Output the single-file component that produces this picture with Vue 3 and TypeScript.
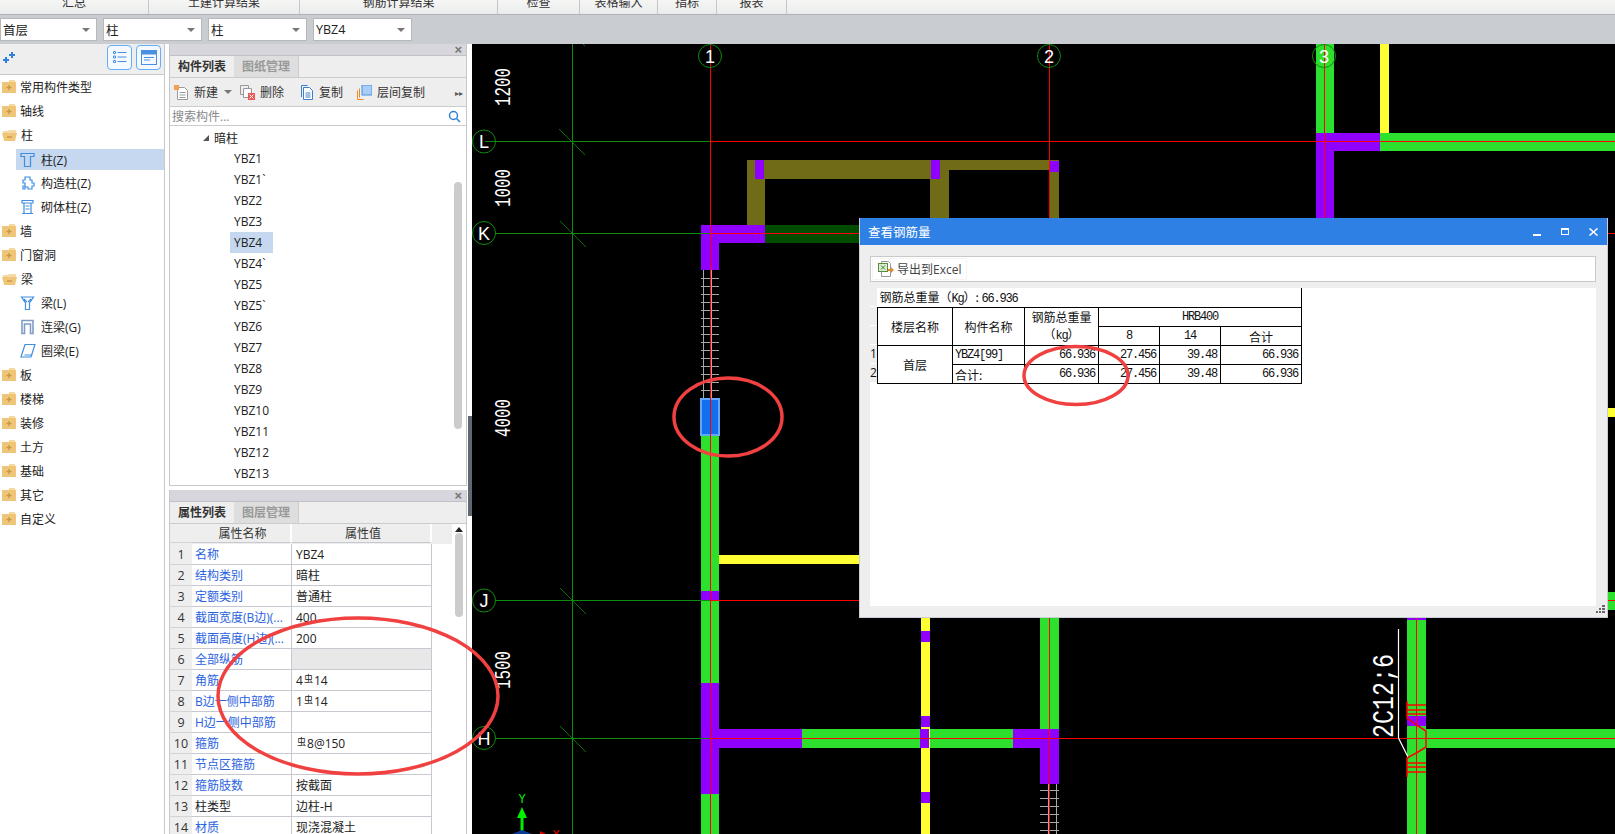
<template>
  <div class="app">
    <div class="menu">
      <div v-for="m in menus" :key="m.label" class="menu-item" :style="{ width: m.w + 'px' }">{{ m.label }}</div>
    </div>

    <div class="filters">
      <div v-for="(f, i) in filters" :key="i" class="select">
        <span>{{ f }}</span><i class="caret"></i>
      </div>
    </div>

    <div class="main">
      <aside class="tree">
        <div class="tree-head">
          <svg class="sparkle" width="14" height="12" viewBox="0 0 14 12">
            <path d="M3 6h2v2h2v2H5v2H3v-2H1V8h2zM9 1h2v2h2v2h-2v2H9V5H7V3h2z" fill="#2f80d8" />
          </svg>
          <button class="view-btn">
            <svg width="14" height="14" viewBox="0 0 14 14" fill="none" stroke="#4a90e0">
              <path d="M.5 1.5h2v2h-2zM.5 6h2v2h-2zM.5 10.5h2v2h-2zM4.5 2.5h9M4.5 7h9M4.5 11.5h9" />
            </svg>
          </button>
          <button class="view-btn">
            <svg width="16" height="15" viewBox="0 0 16 15" fill="none" stroke="#4a90e0">
              <rect x=".5" y=".5" width="15" height="14" />
              <path d="M1 1h14v3H1z" fill="#4a90e0" />
              <path d="M3 7.5h10M3 10h6" />
            </svg>
          </button>
        </div>
        <div v-for="n in tree" :key="n.label" class="tree-row" :class="{ child: n.kind !== 'folder' && n.kind !== 'open', active: n.active }">
          <svg v-if="n.kind === 'folder'" class="ico" width="15" height="14" viewBox="0 0 15 14">
            <path d="M8 0h6v2H8z" fill="#f4d9a4" />
            <rect x="1" y="2" width="14" height="11" fill="#efc677" />
            <path d="M5.500 7.500h5M8 5v5" stroke="#c9974a" stroke-width="1.400" />
          </svg>
          <svg v-else-if="n.kind === 'open'" class="ico" width="16" height="14" viewBox="0 0 16 14">
            <path d="M2 3h5l1-1h7v3H2z" fill="#f4d9a4" />
            <path d="M1 5h15l-2 8H3z" fill="#efc677" />
            <path d="M6 9h5" stroke="#c9974a" stroke-width="1.400" />
          </svg>
          <svg v-else class="ico" width="16" height="16" viewBox="0 0 16 16" fill="none" stroke="#3f8ee0" stroke-width="1.200">
            <path v-if="n.kind === 'col'" d="M1 1.500h13v3h-3.500v10h-6v-10H1z" />
            <path v-else-if="n.kind === 'gz'" d="M5 2h5v3h2v3h2v3h-2v3H8v-2H5v2H3v-3h2V8H3V5h2z" />
            <path v-else-if="n.kind === 'qt'" d="M2 1.500h11v2.500H2zM4 4v10.500h7V4M2 14.500h11M5.500 7h4M5.500 10h4" />
            <path v-else-if="n.kind === 'beam'" d="M1.500 2h12l-4 6v6.500h-4V8zM4 4l3 3M11 4L8 7" />
            <path v-else-if="n.kind === 'lian'" d="M2 1.500h11v13h-2.500V5h-6v9.500H2z" stroke="#7f9cc4" stroke-width="1.600" />
            <path v-else d="M5 1.500h10L11 14H1zM4.500 12h8" />
          </svg>
          <span>{{ n.label }}</span>
        </div>
      </aside>

      <div class="middle">
        <section class="panel list-panel">
          <div class="panel-top"><span>×</span></div>
          <div class="tabs">
            <div class="tab on">构件列表</div>
            <div class="tab">图纸管理</div>
          </div>
          <div class="toolbar">
            <span class="tool new">
              <svg width="15" height="15" viewBox="0 0 15 15" fill="none" stroke="#999">
                <path d="M3.500 2.500h7l3 3v9h-10z" fill="#fff" />
                <path d="M5.500 7.500h6M5.500 10h6M5.500 12.500h6" />
                <rect x="0" y="0" width="5" height="5" fill="#f0a050" stroke="none" />
              </svg>
              新建<i class="caret small"></i>
            </span>
            <span class="tool del">
              <svg width="15" height="15" viewBox="0 0 15 15" fill="none" stroke="#999">
                <path d="M.5.5h8v9h-8z" />
                <path d="M3.500 3.500h8v9h-8z" fill="#fff" />
                <rect x="8" y="8" width="7" height="7" fill="#ee5555" stroke="none" />
                <path d="M9.500 9.500l4 4M13.500 9.500l-4 4" stroke="#fff" />
              </svg>
              删除
            </span>
            <span class="tool copy">
              <svg width="14" height="15" viewBox="0 0 14 15" fill="none" stroke="#3f7fc8">
                <path d="M3.500 2.500h6l3 3v9h-9z" fill="#fff" />
                <path d="M1.500 12V.5h6M5.500 8h5M5.500 10h5M5.500 12h5" />
              </svg>
              复制
            </span>
            <span class="tool layer">
              <svg width="15" height="15" viewBox="0 0 15 15" fill="none">
                <path d="M.5 14.500v-9M.5 14.500h6M2.500 12.500v-9" stroke="#ee8a22" />
                <rect x="5" y="0" width="10" height="10" fill="#a9cdf4" stroke="#4a90e0" />
              </svg>
              层间复制
            </span>
            <span class="more">▸▸</span>
          </div>
          <div class="search">
            <span>搜索构件...</span>
            <svg width="13" height="13" viewBox="0 0 13 13" fill="none" stroke="#2f80d8" stroke-width="1.500">
              <circle cx="5.500" cy="5.500" r="4" /><path d="M8.500 8.500L12 12" />
            </svg>
          </div>
          <div class="list">
            <div class="list-group"><i class="tri"></i>暗柱</div>
            <div class="list-items">
              <div v-for="y in members" :key="y" class="list-item"><span :class="{ picked: y === 'YBZ4' }">{{ y }}</span></div>
            </div>
            <div class="thumb list-thumb"></div>
          </div>
        </section>

        <section class="panel prop-panel">
          <div class="panel-top"><span>×</span></div>
          <div class="tabs">
            <div class="tab on">属性列表</div>
            <div class="tab">图层管理</div>
          </div>
          <div class="prop-body">
            <div class="props">
              <div class="prop-head">
                <div class="c-no blank"></div>
                <div class="c-name">属性名称</div>
                <div class="c-val">属性值</div>
              </div>
              <div v-for="(p, i) in props" :key="p.name" class="prop-row">
                <div class="c-no">{{ i + 1 }}</div>
                <div class="c-name" :class="{ plain: p.plain }">{{ p.name }}</div>
                <div class="c-val" :class="{ grey: p.grey }">
                  <span v-if="p.before !== undefined">{{ p.before }}<sup class="rebar">虫</sup>{{ p.value }}</span>
                  <span v-else>{{ p.value }}</span>
                </div>
              </div>
            </div>
            <div class="prop-scroll">
              <i class="up"></i>
              <div class="thumb prop-thumb"></div>
            </div>
          </div>
        </section>
      </div>

      <div class="splitter"><div class="grab"></div></div>

      <div class="canvas">
        <svg class="drawing" width="1144" height="790" viewBox="471 44 1144 790" shape-rendering="crispEdges">
          <rect v-for="(r, i) in blocks" :key="'b' + i" :x="r[0]" :y="r[1]" :width="r[2]" :height="r[3]" :fill="r[4]" />
          <path :d="rebarPath" stroke="#a8a8a8" fill="none" />
          <path d="M484 141.500H709M494 233.500H709M494 600.500H709M494 738.500H709M571.500 44V834" stroke="#0f8a0f" fill="none" />
          <path d="M709.500 44V834M709 141.500H1615M709 233.500H1615M709 600.500H1615M709 738.500H1615M1048.500 44V834M1323.500 44V220M1415.500 618V834" stroke="#ff0000" fill="none" />
          <g shape-rendering="auto">
            <path d="M558 129L584 155M559 221L585 247M559 588L585 614M559 726L585 752M582 44L584 46" stroke="#0f8a0f" stroke-width=".8" fill="none" />
            <g v-for="c in bubbles" :key="c.t">
              <circle :cx="c.x" :cy="c.y" r="11.500" fill="none" stroke="#0f8a0f" />
              <text :x="c.x" :y="c.y + 6.500" class="bubble" text-anchor="middle">{{ c.t }}</text>
            </g>
            <text v-for="d in dims" :key="d.t" class="dim" :transform="`translate(${d.x},${d.y}) rotate(-90)`" textLength="38" lengthAdjust="spacingAndGlyphs">{{ d.t }}</text>
            <text class="note" transform="translate(1392,738) rotate(-90)" textLength="84" lengthAdjust="spacingAndGlyphs">2C12;6</text>
            <path d="M1397.500 629V738L1407 757" stroke="#fff" stroke-width="1.200" fill="none" />
            <path d="M1406 701V718L1417 726L1425 731V747L1417 752L1406 758V777M1406 705H1425M1406 710H1425M1406 714H1425M1406 763H1425M1406 767H1425M1406 772H1425" stroke="#ff0000" stroke-width="1.500" fill="none" />
            <path d="M521 807L516 818H519.500V832H522.500V818H526Z" fill="#00f000" />
            <path d="M511 834L521 830L531 834Z" fill="#0a3c96" />
            <text x="521" y="803" class="axis-y" text-anchor="middle">Y</text>
            <path d="M539 834V831L545 834Z" fill="#e00000" />
            <text x="555" y="839" class="axis-x" text-anchor="middle">X</text>
          </g>
        </svg>

        <div class="dialog">
          <div class="dlg-title">
            <span>查看钢筋量</span>
            <div class="dlg-btns">
              <i class="b-min"></i>
              <i class="b-max"></i>
              <svg width="9" height="8" viewBox="0 0 9 8" stroke="#fff" stroke-width="1.500"><path d="M.5.5l8 7M8.500.5l-8 7" /></svg>
            </div>
          </div>
          <div class="dlg-bar">
            <div class="export">
              <svg width="16" height="18" viewBox="0 0 16 18" fill="none">
                <path d="M3.500 1.500h7l2 2v13h-9z" fill="#fff" stroke="#999" />
                <rect x=".5" y="3.500" width="9" height="8" fill="#dcecd4" stroke="#5c8a3c" />
                <path d="M3 5.500l4 4M7 5.500l-4 4" stroke="#3f8a2c" />
                <path d="M10 9h3V7l3 3-3 3v-2h-3z" fill="#e58a2c" />
              </svg>
              导出到Excel
            </div>
          </div>
          <div class="dlg-content">
            <div class="row-strip">
              <div style="height: 19px"></div>
              <div style="height: 19px"></div>
              <div style="height: 19px"></div>
              <div style="height: 19px">1</div>
              <div style="height: 19px">2</div>
            </div>
            <table class="sheet">
              <colgroup>
                <col style="width: 75px" /><col style="width: 72px" /><col style="width: 74px" />
                <col style="width: 61px" /><col style="width: 61px" /><col style="width: 81px" />
              </colgroup>
              <tbody>
                <tr>
                  <td colspan="6" class="sheet-title">钢筋总重量（<span class="mono">Kg</span>）: <span class="mono">66.936</span></td>
                </tr>
                <tr>
                  <td rowspan="2">楼层名称</td>
                  <td rowspan="2">构件名称</td>
                  <td rowspan="2" class="two">钢筋总重量<br />（<span class="mono">kg</span>）</td>
                  <td colspan="3" class="mono">HRB400</td>
                </tr>
                <tr>
                  <td class="mono">8</td>
                  <td class="mono">14</td>
                  <td>合计</td>
                </tr>
                <tr>
                  <td rowspan="2">首层</td>
                  <td class="left mono">YBZ4[99]</td>
                  <td v-for="v in sums" :key="'a' + v" class="num mono">{{ v }}</td>
                </tr>
                <tr>
                  <td class="left">合计:</td>
                  <td v-for="v in sums" :key="'b' + v" class="num mono">{{ v }}</td>
                </tr>
              </tbody>
            </table>
          </div>
          <svg class="grip" width="9" height="9" viewBox="0 0 9 9" fill="#666" shape-rendering="crispEdges">
            <path d="M6 0h3v2H6zM3 3h2v2H3zM6 3h3v2H6zM0 6h2v2H0zM3 6h2v2H3zM6 6h3v2H6z" />
          </svg>
        </div>
      </div>
    </div>

    <svg class="marks" width="1615" height="834" viewBox="0 0 1615 834" fill="none" stroke="#f04040" stroke-width="3.500">
      <ellipse cx="358" cy="696" rx="140" ry="78" />
      <ellipse cx="728" cy="417" rx="54" ry="39" />
      <ellipse cx="1076" cy="375.500" rx="52" ry="29" />
    </svg>
  </div>
</template>

<script setup lang="ts">
import { computed } from 'vue'

type Block = [number, number, number, number, string]

interface TreeNode {
  label: string
  kind: string
  active?: boolean
}

interface Prop {
  name: string
  value: string
  before?: string
  plain?: boolean
  grey?: boolean
}

const GREEN = '#2de02d'
const PURPLE = '#8f00ff'
const OLIVE = '#6f6b16'
const YELLOW = '#ffff33'
const DARK = '#004d00'

const menus = [
  { label: '汇总', w: 149 },
  { label: '土建计算结果', w: 151 },
  { label: '钢筋计算结果', w: 198 },
  { label: '检查', w: 82 },
  { label: '表格输入', w: 78 },
  { label: '指标', w: 59 },
  { label: '报表', w: 70 },
]

const filters = ['首层', '柱', '柱', 'YBZ4']

const tree: TreeNode[] = [
  { label: '常用构件类型', kind: 'folder' },
  { label: '轴线', kind: 'folder' },
  { label: '柱', kind: 'open' },
  { label: '柱(Z)', kind: 'col', active: true },
  { label: '构造柱(Z)', kind: 'gz' },
  { label: '砌体柱(Z)', kind: 'qt' },
  { label: '墙', kind: 'folder' },
  { label: '门窗洞', kind: 'folder' },
  { label: '梁', kind: 'open' },
  { label: '梁(L)', kind: 'beam' },
  { label: '连梁(G)', kind: 'lian' },
  { label: '圈梁(E)', kind: 'ring' },
  { label: '板', kind: 'folder' },
  { label: '楼梯', kind: 'folder' },
  { label: '装修', kind: 'folder' },
  { label: '土方', kind: 'folder' },
  { label: '基础', kind: 'folder' },
  { label: '其它', kind: 'folder' },
  { label: '自定义', kind: 'folder' },
]

const members = [
  'YBZ1', 'YBZ1`', 'YBZ2', 'YBZ3', 'YBZ4', 'YBZ4`', 'YBZ5', 'YBZ5`',
  'YBZ6', 'YBZ7', 'YBZ8', 'YBZ9', 'YBZ10', 'YBZ11', 'YBZ12', 'YBZ13',
]

const props: Prop[] = [
  { name: '名称', value: 'YBZ4' },
  { name: '结构类别', value: '暗柱' },
  { name: '定额类别', value: '普通柱' },
  { name: '截面宽度(B边)(...', value: '400' },
  { name: '截面高度(H边)(...', value: '200' },
  { name: '全部纵筋', value: '', grey: true },
  { name: '角筋', before: '4', value: '14' },
  { name: 'B边一侧中部筋', before: '1', value: '14' },
  { name: 'H边一侧中部筋', value: '' },
  { name: '箍筋', before: '', value: '8@150' },
  { name: '节点区箍筋', value: '' },
  { name: '箍筋肢数', value: '按截面' },
  { name: '柱类型', value: '边柱-H', plain: true },
  { name: '材质', value: '现浇混凝土' },
]

const sums = ['66.936', '27.456', '39.48', '66.936']

const bubbles = [
  { t: '1', x: 709, y: 56 },
  { t: '2', x: 1048, y: 56 },
  { t: '3', x: 1323, y: 56 },
  { t: 'L', x: 483, y: 141.5 },
  { t: 'K', x: 483, y: 233 },
  { t: 'J', x: 483, y: 600.5 },
  { t: 'H', x: 483, y: 738 },
]

const dims = [
  { t: '1200', x: 509, y: 106 },
  { t: '1000', x: 509, y: 207 },
  { t: '4000', x: 509, y: 437 },
  { t: '1500', x: 509, y: 689 },
]

const blocks: Block[] = [
  // olive beams at the top of column 1-2
  [746, 160, 18, 65, OLIVE],
  [746, 160, 202, 19, OLIVE],
  [929, 160, 19, 65, OLIVE],
  [948, 160, 110, 10, OLIVE],
  [1048, 170, 10, 50, OLIVE],
  [754, 160, 9, 19, PURPLE],
  [930, 160, 9, 19, PURPLE],
  [1048, 161, 10, 11, PURPLE],
  [764, 225, 100, 18, DARK],
  // axis 1
  [700, 225, 64, 18, PURPLE],
  [700, 225, 18, 45, PURPLE],
  [700, 436, 18, 398, GREEN],
  [700, 591, 18, 9, PURPLE],
  [700, 683, 18, 111, PURPLE],
  [718, 555, 150, 9, YELLOW],
  [699, 398, 20, 38, '#62a8f8'],
  [701, 400, 16, 34, '#1070f0'],
  // axis H
  [718, 729, 83, 19, PURPLE],
  [801, 729, 211, 19, GREEN],
  [920, 618, 9, 216, YELLOW],
  [920, 631, 9, 11, PURPLE],
  [920, 716, 9, 11, PURPLE],
  [920, 792, 9, 11, PURPLE],
  [919, 729, 9, 19, PURPLE],
  [1039, 618, 19, 111, GREEN],
  [1012, 729, 46, 19, PURPLE],
  [1039, 729, 19, 55, PURPLE],
  [1406, 618, 19, 216, GREEN],
  [1406, 618, 19, 2, PURPLE],
  [1406, 716, 19, 10, PURPLE],
  [1425, 729, 190, 19, GREEN],
  // axis 3
  [1315, 44, 18, 89, GREEN],
  [1379, 44, 9, 89, YELLOW],
  [1315, 133, 64, 18, PURPLE],
  [1315, 133, 18, 90, PURPLE],
  [1379, 133, 236, 18, GREEN],
  // pieces right of the dialog
  [1600, 408, 15, 9, YELLOW],
  [1600, 592, 15, 18, GREEN],
]

// stirrup ticks of the two columns that only show their rebar
const rebarPath = computed(() => {
  const parts: string[] = ['M702.500 270V398M710.500 270V398M1047.500 784V834M1055.500 784V834']
  for (let y = 278; y <= 390; y += 8) parts.push(`M700 ${y + 0.5}H718`)
  for (let y = 790; y <= 830; y += 8) parts.push(`M1039 ${y + 0.5}H1058`)
  return parts.join('')
})
</script>

<style>
html,
body {
  margin: 0;
  overflow: hidden;
  background: #fff;
}
</style>

<style scoped>
.app {
  position: relative;
  width: 1615px;
  height: 834px;
  overflow: hidden;
  font-family: "Open Sans", "Noto Sans CJK SC", sans-serif;
  font-size: 12px;
  color: #222;
}

.menu {
  display: flex;
  height: 14px;
  background: linear-gradient(#f6f6f4, #e9edec);
  overflow: hidden;
}

.menu-item {
  box-sizing: border-box;
  height: 14px;
  line-height: 6px;
  text-align: center;
  border-right: 1px solid #c4c8cc;
  color: #333;
}

.filters {
  display: flex;
  gap: 6px;
  height: 30px;
  padding-top: 3px;
  box-sizing: border-box;
  background: #c9ccd1;
  border-top: 1px solid #aeb2b6;
}

.select {
  box-sizing: border-box;
  display: flex;
  align-items: center;
  justify-content: space-between;
  width: 99px;
  height: 23px;
  padding: 0 6px 0 2px;
  background: #fff;
  border: 1px solid #b8b8b8;
  font-size: 12.500px;
}

.select:first-child {
  width: 97px;
}

.caret {
  width: 0;
  height: 0;
  border: 4px solid transparent;
  border-top-color: #777;
  border-bottom: 0;
}

.caret.small {
  margin-left: 1px;
}

.main {
  display: flex;
  height: 790px;
}

.tree {
  flex: none;
  width: 165px;
  box-sizing: border-box;
  border-right: 1px solid #c8c8c8;
  background: #fff;
}

.tree-head {
  display: flex;
  align-items: center;
  gap: 4px;
  box-sizing: border-box;
  height: 31px;
  padding: 0 3px 4px 2px;
  background: #eee;
  border-bottom: 1px solid #c8c8c8;
}

.sparkle {
  margin-right: auto;
}

.view-btn {
  display: flex;
  align-items: center;
  justify-content: center;
  width: 25px;
  height: 25px;
  padding: 0;
  background: #f4f9ff;
  border: 1px solid #62aef8;
  border-radius: 4px;
}

.tree-row {
  display: flex;
  align-items: center;
  gap: 4px;
  height: 24px;
  padding-left: 1px;
  box-sizing: border-box;
}

.tree-row .ico {
  flex: none;
}

.tree-row.child {
  margin-left: 16px;
  padding-left: 4px;
  gap: 5px;
}

.tree-row.active {
  height: 21px;
  margin-top: 2px;
  margin-bottom: 1px;
  background: #c6d7f0;
}

.middle {
  flex: none;
  width: 298px;
  margin-left: 4px;
  display: flex;
  flex-direction: column;
  gap: 4px;
}

.panel {
  box-sizing: border-box;
  display: flex;
  flex-direction: column;
  border: 1px solid #c8c8c8;
  border-top: 0;
  background: #fff;
}

.list-panel {
  height: 442px;
}

.prop-panel {
  flex: 1;
  min-height: 0;
  overflow: hidden;
  border-bottom: 0;
}

.panel-top {
  flex: none;
  box-sizing: border-box;
  height: 12px;
  padding-right: 4px;
  background: #d6d6dc;
  border-bottom: 1px solid #c0c0c8;
  color: #777;
  font: bold 13px/11px "Liberation Sans", sans-serif;
  text-align: right;
}

.tabs {
  flex: none;
  display: flex;
  height: 21px;
  background: #eee;
}

.tab {
  box-sizing: border-box;
  width: 65px;
  line-height: 22px;
  text-align: center;
  font-weight: 700;
  color: #999;
  background: #dedede;
  border-right: 1px solid #ccc;
}

.tab.on {
  width: 64px;
  color: #333;
  background: #eee;
  border-right: 0;
}

.toolbar {
  flex: none;
  display: flex;
  align-items: center;
  height: 30px;
  padding-left: 4px;
  box-sizing: border-box;
  background: #eee;
  border-top: 1px solid #ccc;
  border-bottom: 1px solid #ccc;
}

.tool {
  display: flex;
  align-items: center;
  gap: 5px;
  color: #333;
}

.tool.del {
  margin-left: 8px;
}

.tool.copy {
  margin-left: 16px;
}

.tool.layer {
  margin-left: 14px;
}

.more {
  margin-left: auto;
  padding-right: 3px;
  font-size: 8px;
  color: #555;
}

.search {
  flex: none;
  display: flex;
  align-items: center;
  justify-content: space-between;
  box-sizing: border-box;
  height: 19px;
  padding: 0 5px 0 2px;
  color: #888;
  border-bottom: 1px solid #ccc;
}

.list {
  position: relative;
  flex: 1;
  min-height: 0;
  overflow: hidden;
  padding-top: 1px;
}

.list-group {
  display: flex;
  align-items: center;
  height: 21px;
  padding-left: 33px;
  gap: 5px;
}

.tri {
  width: 0;
  height: 0;
  border-bottom: 6px solid #555;
  border-left: 6px solid transparent;
}

.list-item {
  height: 21px;
  line-height: 21px;
  padding-left: 60px;
}

.list-item span {
  display: inline-block;
  min-width: 35px;
  padding: 0 4px;
}

.list-item .picked {
  background: #c6d7f0;
}

.thumb {
  background: #ccc;
  border-radius: 4px;
}

.list-thumb {
  position: absolute;
  top: 56px;
  right: 4px;
  width: 8px;
  height: 247px;
}

.prop-body {
  flex: 1;
  display: flex;
  min-height: 0;
  border-top: 1px solid #ccc;
}

.props {
  flex: none;
  width: 282px;
}

.prop-head {
  display: flex;
  height: 19px;
  background: #eee;
  border-bottom: 1px solid transparent;
}

.prop-head .c-name,
.prop-head .c-val {
  text-align: center;
  line-height: 19px;
  border-right: 2px solid #fff;
  color: #333;
}

.blank {
  background: #fff;
}

.prop-row {
  display: flex;
  height: 21px;
  box-sizing: border-box;
}

.c-no {
  flex: none;
  box-sizing: border-box;
  width: 22px;
  background: #eee;
  text-align: center;
  line-height: 21px;
  font-size: 12.500px;
  color: #333;
  border-bottom: 1px solid #d4d4d4;
}

.c-name {
  flex: none;
  box-sizing: border-box;
  width: 100px;
  padding-left: 3px;
  color: #2a62e0;
  line-height: 21px;
  white-space: nowrap;
  overflow: hidden;
  border: 1px solid #c8c8d0;
  border-width: 0 1px 1px 0;
}

.c-name.plain {
  color: #222;
}

.c-val {
  flex: none;
  box-sizing: border-box;
  width: 140px;
  padding-left: 4px;
  line-height: 21px;
  color: #222;
  border: 1px solid #c8c8d0;
  border-width: 0 1px 1px 0;
}

.c-val.grey {
  background: #e8e8e8;
}

.rebar {
  font-size: 9px;
  line-height: 0;
  vertical-align: 3px;
  margin: 0 1px;
}

.prop-scroll {
  flex: 1;
  display: flex;
  flex-direction: column;
  align-items: center;
}

.up {
  width: 0;
  height: 0;
  margin-top: 3px;
  border: 4px solid transparent;
  border-bottom: 5px solid #222;
  border-top: 0;
}

.prop-thumb {
  width: 8px;
  height: 84px;
  margin-top: 1px;
}

.splitter {
  flex: none;
  width: 4px;
  margin-left: 1px;
  background: #fff;
}

.grab {
  height: 100px;
  margin-top: 372px;
  background: #5f6870;
}

.canvas {
  position: relative;
  flex: 1;
  min-width: 0;
  background: #000;
  overflow: hidden;
}

.drawing {
  display: block;
}

.bubble {
  fill: #fff;
  font: 18px "Liberation Sans", sans-serif;
}

.dim {
  fill: #fff;
  font: 22px "Liberation Mono", monospace;
}

.note {
  fill: #fff;
  font: 29px "Liberation Mono", monospace;
}

.axis-y {
  fill: #00f000;
  font: 12px "Liberation Mono", monospace;
}

.axis-x {
  fill: #f00000;
  font: 12px "Liberation Mono", monospace;
}

.dialog {
  position: absolute;
  left: 387px;
  top: 174px;
  box-sizing: border-box;
  width: 749px;
  height: 400px;
  background: #eee;
  border: 1px solid #c9ced6;
  border-top: 0;
}

.dlg-title {
  display: flex;
  align-items: center;
  justify-content: space-between;
  height: 27px;
  padding: 0 9px 0 8px;
  background: #2f80e4;
  color: #fff;
  font-size: 12.500px;
}

.dlg-btns {
  display: flex;
  align-items: center;
  gap: 20px;
}

.b-min {
  width: 8px;
  height: 2px;
  margin-top: 6px;
  background: #fff;
}

.b-max {
  box-sizing: border-box;
  width: 8px;
  height: 7px;
  border: 1px solid #fff;
  border-top-width: 2px;
}

.dlg-bar {
  box-sizing: border-box;
  height: 26px;
  margin: 11px 11px 0 10px;
  padding: 1px 1px;
  background: #fff;
  border: 1px solid #c8c8c8;
  display: flex;
}

.export {
  display: flex;
  align-items: center;
  gap: 3px;
  padding: 0 5px;
  border: 1px solid #f4f4f4;
  border-radius: 2px;
  color: #444;
}

.dlg-content {
  display: flex;
  align-items: flex-start;
  height: 318px;
  margin: 6px 11px 0 10px;
  background: #fff;
}

.row-strip {
  flex: none;
  width: 7px;
  background: #eee;
  overflow: hidden;
  font-size: 12px;
  line-height: 18px;
  color: #111;
}

.row-strip div {
  box-sizing: border-box;
  border-bottom: 1px solid #fff;
}

.sheet {
  table-layout: fixed;
  width: 424px;
  border-collapse: collapse;
  font-family: "Noto Sans CJK SC", sans-serif;
  font-size: 12px;
  color: #111;
}

.sheet td {
  height: 18px;
  padding: 0;
  line-height: 15px;
  text-align: center;
  border: 1px solid #000;
  overflow: hidden;
  white-space: nowrap;
}

.sheet .sheet-title {
  height: 19px;
  text-align: left;
  padding-left: 2px;
  border-top: 0;
  border-left: 0;
}

.sheet .left {
  text-align: left;
  padding-left: 2px;
}

.sheet .num {
  text-align: right;
  padding-right: 3px;
}

.sheet .two {
  line-height: 17px;
}

.mono {
  font-family: "Liberation Mono", monospace;
  letter-spacing: -1.200px;
}

.sheet td.mono {
  letter-spacing: -1.200px;
}

.grip {
  position: absolute;
  right: 2px;
  bottom: 3px;
}

.marks {
  position: absolute;
  left: 0;
  top: 0;
  pointer-events: none;
}
</style>
